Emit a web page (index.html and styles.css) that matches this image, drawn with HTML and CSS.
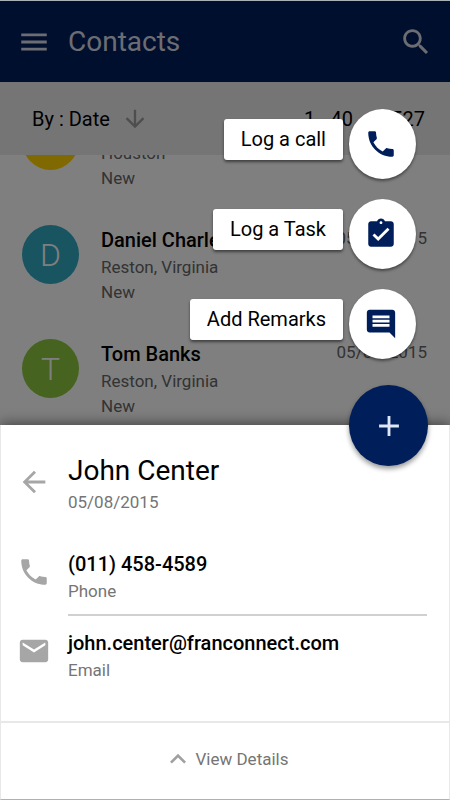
FILE: index.html
```
<!DOCTYPE html>
<html lang="en">
<head>
  <meta charset="UTF-8" />
  <meta name="viewport" content="width=device-width, initial-scale=1.0"/>
  <title>Contacts</title>
  <link rel="stylesheet" href="styles.css">
</head>
<body>
  <div class="backdrop">
    <header class="topbar">
      <button class="icon-btn" aria-label="Menu">
        <svg class="icon" viewBox="0 0 24 24"><path d="M3 18h18v-2H3v2zm0-5h18v-2H3v2zm0-7v2h18V6H3z"/></svg>
      </button>
      <h1>Contacts</h1>
      <button class="icon-btn" aria-label="Search">
        <svg class="icon" viewBox="0 0 24 24"><path d="M15.5 14h-.79l-.28-.27C15.41 12.59 16 11.11 16 9.5 16 5.91 13.09 3 9.5 3S3 5.91 3 9.5 5.91 16 9.5 16c1.61 0 3.09-.59 4.23-1.57l.27.28v.79l5 4.99L20.49 19l-4.99-5zm-6 0C7.01 14 5 11.99 5 9.5S7.01 5 9.5 5 14 7.01 14 9.5 11.99 14 9.5 14z"/></svg>
      </button>
    </header>

    <div class="sortbar">
      <button class="sort-btn">
        By : Date
        <svg class="icon-sort" viewBox="0 0 24 24"><path d="M20 12l-1.41-1.41L13 16.17V4h-2v12.17l-5.58-5.59L4 12l8 8 8-8z"/></svg>
      </button>
      <span>1 - 40 &nbsp;of &nbsp;527</span>
    </div>

    <ul class="contacts">
      <li class="contact">
        <span class="avatar yellow">J</span>
        <div class="info">
          <h2>John Center</h2>
          <p>Houston</p>
          <p>New</p>
        </div>
        <time>05/08/2015</time>
      </li>
      <li class="contact">
        <span class="avatar blue">D</span>
        <div class="info">
          <h2>Daniel Charles</h2>
          <p>Reston, Virginia</p>
          <p>New</p>
        </div>
        <time>05/08/2015</time>
      </li>
      <li class="contact">
        <span class="avatar green">T</span>
        <div class="info">
          <h2>Tom Banks</h2>
          <p>Reston, Virginia</p>
          <p>New</p>
        </div>
        <time>05/08/2015</time>
      </li>
    </ul>
  </div>

  <section class="sheet">
    <div class="row sheet-head">
      <button class="icon-btn" aria-label="Back">
        <svg class="icon" viewBox="0 0 24 24"><path d="M20 11H7.83l5.59-5.59L12 4l-8 8 8 8 1.41-1.41L7.83 13H20v-2z"/></svg>
      </button>
      <div>
        <h2 class="name">John Center</h2>
        <p>05/08/2015</p>
      </div>
    </div>
    <div class="row phone">
      <svg class="icon" viewBox="0 0 24 24"><path d="M6.62 10.79c1.44 2.83 3.76 5.14 6.59 6.59l2.2-2.2c.27-.27.67-.36 1.02-.24 1.12.37 2.33.57 3.57.57.55 0 1 .45 1 1V20c0 .55-.45 1-1 1-9.39 0-17-7.61-17-17 0-.55.45-1 1-1h3.5c.55 0 1 .45 1 1 0 1.25.2 2.45.57 3.57.11.35.03.74-.25 1.02l-2.2 2.2z"/></svg>
      <div class="field">
        <a href="tel:0114584589">(011) 458-4589</a>
        <p>Phone</p>
      </div>
    </div>
    <div class="row email">
      <svg class="icon" viewBox="0 0 24 24"><path d="M20 4H4c-1.1 0-1.99.9-1.99 2L2 18c0 1.1.9 2 2 2h16c1.1 0 2-.9 2-2V6c0-1.1-.9-2-2-2zm0 4l-8 5-8-5V6l8 5 8-5v2z"/></svg>
      <div>
        <a href="mailto:john.center@franconnect.com">john.center@franconnect.com</a>
        <p>Email</p>
      </div>
    </div>
    <button class="details-btn">
      <svg class="icon-up" viewBox="0 0 24 24"><path d="M12 8l-6 6 1.41 1.41L12 10.83l4.59 4.58L18 14z"/></svg>
      View Details
    </button>

    <div class="speed-dial">
      <button class="action">
        <span class="label">Log a call</span>
        <span class="mini"><svg class="icon" viewBox="0 0 24 24"><path d="M6.62 10.79c1.44 2.83 3.76 5.14 6.59 6.59l2.2-2.2c.27-.27.67-.36 1.02-.24 1.12.37 2.33.57 3.57.57.55 0 1 .45 1 1V20c0 .55-.45 1-1 1-9.39 0-17-7.61-17-17 0-.55.45-1 1-1h3.5c.55 0 1 .45 1 1 0 1.25.2 2.45.57 3.57.11.35.03.74-.25 1.02l-2.2 2.2z"/></svg></span>
      </button>
      <button class="action">
        <span class="label">Log a Task</span>
        <span class="mini"><svg class="icon" viewBox="0 0 24 24"><path d="M19 3h-4.18C14.4 1.84 13.3 1 12 1c-1.3 0-2.4.84-2.82 2H5c-1.1 0-2 .9-2 2v14c0 1.1.9 2 2 2h14c1.1 0 2-.9 2-2V5c0-1.1-.9-2-2-2zm-7 0c.55 0 1 .45 1 1s-.45 1-1 1-1-.45-1-1 .45-1 1-1zm-2 14l-4-4 1.41-1.41L10 14.17l6.59-6.59L18 9l-8 8z"/></svg></span>
      </button>
      <button class="action">
        <span class="label">Add Remarks</span>
        <span class="mini"><svg class="icon" viewBox="0 0 24 24"><path d="M21.99 4c0-1.1-.89-2-1.99-2H4c-1.1 0-2 .9-2 2v12c0 1.1.9 2 2 2h14l4 4-.01-18zM18 14H6v-2h12v2zm0-3H6V9h12v2zm0-3H6V6h12v2z"/></svg></span>
      </button>
      <button class="fab" aria-label="Close actions">
        <svg class="icon" viewBox="0 0 24 24"><path d="M19 13h-6v6h-2v-6H5v-2h6V5h2v6h6v2z"/></svg>
      </button>
    </div>
  </section>
</body>
</html>
```

FILE: styles.css
```
* {
  box-sizing: border-box;
}
body {
  margin: 0;
  font-family: Roboto, sans-serif;
  font-size: 17px;
  color: #000;
  background: #fff;
  display: flex;
  flex-direction: column;
  height: 100vh;
}
h1, h2, p, ul {
  margin: 0;
  padding: 0;
}
button {
  font-family: inherit;
  color: inherit;
  background: none;
  border: none;
  padding: 0;
  cursor: pointer;
}
a {
  color: inherit;
  text-decoration: none;
}
svg {
  display: block;
  fill: currentColor;
}
.icon {
  width: 34px;
  height: 34px;
}

/* list behind the scrim */
.backdrop {
  position: relative;
  flex: 1;
  min-height: 0;
  display: flex;
  flex-direction: column;
}
.backdrop::after {
  content: "";
  position: absolute;
  inset: 1px 0 0;
  background: rgba(0, 0, 0, 0.5);
}
.topbar {
  display: flex;
  align-items: center;
  flex-shrink: 0;
  height: 82px;
  padding: 0 17px;
  border-top: 1px solid #a9b0b8;
  background: #001e5a;
  color: #d9dbe4;
}
.topbar h1 {
  flex: 1;
  margin-left: 17px;
  font-size: 28px;
  font-weight: 400;
  line-height: 38px;
}
.sortbar {
  display: flex;
  align-items: center;
  justify-content: space-between;
  flex-shrink: 0;
  height: 73px;
  padding: 0 25px 0 32px;
  background: #ebebeb;
  font-size: 20px;
}
.sort-btn {
  display: flex;
  align-items: center;
  gap: 11px;
  font-size: 20px;
}
.icon-sort {
  width: 28px;
  height: 28px;
  color: #9c9c9c;
}
.contacts {
  flex: 1;
  min-height: 0;
  overflow: hidden;
  display: flex;
  flex-direction: column;
  justify-content: flex-end;
  list-style: none;
}
.contact {
  display: flex;
  align-items: flex-start;
  flex-shrink: 0;
  height: 114px;
  padding: 28px 23px 0 22px;
}
.avatar {
  width: 57px;
  height: 59px;
  border-radius: 50%;
  color: #fff;
  font-size: 32px;
  font-weight: 300;
  line-height: 60px;
  text-align: center;
}
.yellow {
  background: #ffd200;
}
.blue {
  background: #33a9c2;
}
.green {
  background: #8cc63f;
}
.info {
  flex: 1;
  margin-left: 22px;
  line-height: 25px;
  color: #666;
}
.info h2 {
  font-size: 20px;
  font-weight: 500;
  line-height: 30px;
  color: #000;
}
.contact time {
  line-height: 27px;
  color: #666;
}

/* bottom sheet */
.sheet {
  position: relative;
  background: #fff;
  border: 1px solid #e8e8e8;
  border-top: none;
  border-bottom-color: #b0b0b0;
  box-shadow: 0 -2px 12px rgba(0, 0, 0, 0.45);
  color: #757575;
  line-height: 26px;
}
.row {
  display: grid;
  grid-template-columns: 65px 1fr;
  align-items: start;
  gap: 2px;
  padding-right: 22px;
}
.row .icon {
  margin: 4px auto 0;
  color: #a6a6a6;
}
.sheet-head {
  padding-top: 28px;
}
.sheet-head .icon-btn {
  padding-top: 8px;
}
.name {
  font-size: 28px;
  font-weight: 400;
  line-height: 36px;
  color: #000;
}
.row a {
  font-size: 20px;
  font-weight: 500;
  line-height: 27px;
  color: #000;
}
.phone {
  margin-top: 36px;
}
.field {
  padding-bottom: 10px;
  border-bottom: 2px solid #d0d0d0;
}
.email {
  padding-top: 14px;
  padding-bottom: 38px;
}
.details-btn {
  display: flex;
  align-items: center;
  justify-content: center;
  gap: 2px;
  width: 100%;
  height: 78px;
  padding-bottom: 5px;
  border-top: 2px solid #e8e8e8;
  font-size: 17px;
}
.icon-up {
  width: 32px;
  height: 32px;
  color: #a0a0a0;
}

/* floating actions */
.speed-dial {
  position: absolute;
  right: 21px;
  bottom: calc(100% - 41px);
  display: flex;
  flex-direction: column;
  align-items: flex-end;
}
.action {
  display: flex;
  align-items: center;
  gap: 6px;
  margin: 0 12px 20px 0;
}
.label {
  margin-bottom: 10px;
  padding: 0 17px;
  border-radius: 3px;
  background: #fff;
  box-shadow: 0 2px 3px rgba(0, 0, 0, 0.5);
  font-size: 20px;
  line-height: 41px;
  white-space: nowrap;
  color: #000;
}
.mini, .fab {
  display: flex;
  align-items: center;
  justify-content: center;
  border-radius: 50%;
}
.mini {
  width: 67px;
  height: 70px;
  padding-right: 3px;
  background: #fff;
  box-shadow: 0 2px 3px rgba(0, 0, 0, 0.45);
  color: #001e5a;
}
.fab {
  width: 79px;
  height: 81px;
  margin-top: 6px;
  background: #001e5a;
  box-shadow: 0 3px 5px rgba(0, 0, 0, 0.4);
  color: #dfe6f5;
}
```
